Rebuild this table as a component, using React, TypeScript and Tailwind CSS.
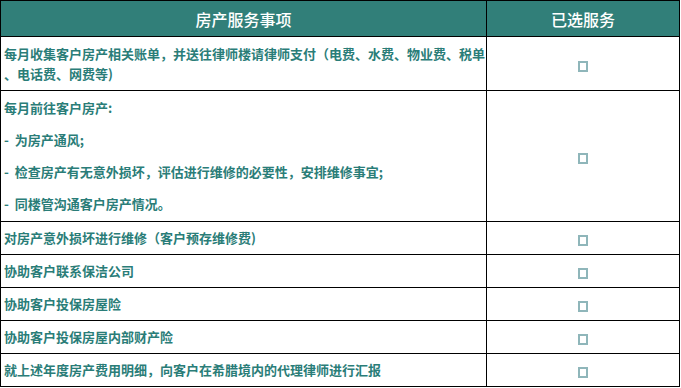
const rows: { text: string[]; tall?: boolean }[] = [
  { text: ["每月收集客户房产相关账单，并送往律师楼请律师支付（电费、水费、物业费、税单", "、电话费、网费等)"] },
  {
    text: [
      "每月前往客户房产:",
      "-  为房产通风;",
      "-  检查房产有无意外损坏，评估进行维修的必要性，安排维修事宜;",
      "-  同楼管沟通客户房产情况。",
    ],
    tall: true,
  },
  { text: ["对房产意外损坏进行维修（客户预存维修费)"] },
  { text: ["协助客户联系保洁公司"] },
  { text: ["协助客户投保房屋险"] },
  { text: ["协助客户投保房屋内部财产险"] },
  { text: ["就上述年度房产费用明细，向客户在希腊境内的代理律师进行汇报"] },
];

const App = () => {
  return (
    <div className="w-[681px] h-[388px] bg-white font-['Noto_Sans_CJK_SC',sans-serif]">
      <table className="w-[680px] border-collapse table-fixed">
        <colgroup>
          <col className="w-[486px]" />
          <col />
        </colgroup>
        <thead>
          <tr className="h-[36px] bg-[#317f79] text-white text-[16px]">
            <th className="border border-black font-medium">房产服务事项</th>
            <th className="border border-black font-medium">已选服务</th>
          </tr>
        </thead>
        <tbody>
          {rows.map((row, i) => (
            <tr
              key={i}
              className={i === 0 ? "h-[54px]" : row.tall ? "h-[131px]" : "h-[33px]"}
            >
              <td className="border border-black pl-[3px] pr-0 align-middle text-[13px] leading-[20px] font-bold text-[#2a7d78]">
                <div className={row.tall ? "flex flex-col gap-[12px]" : "flex flex-col"}>
                  {row.text.map((t, j) => (
                    <p key={j} className="whitespace-pre">{t}</p>
                  ))}
                </div>
              </td>
              <td className="border border-black text-center align-middle">
                <span className="inline-block w-[10px] h-[11px] border-2 border-[#8fb6ba] bg-white align-middle" />
              </td>
            </tr>
          ))}
        </tbody>
      </table>
    </div>
  );
};

export default App;
